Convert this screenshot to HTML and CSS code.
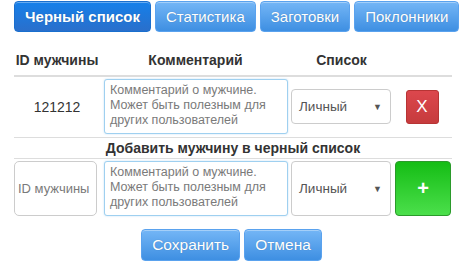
FILE: index.html
```html
<!DOCTYPE html>
<html lang="ru">
<head>
  <meta charset="UTF-8">
  <title>Черный список</title>
  <link rel="stylesheet" href="styles.css">
</head>
<body>

  <nav class="tabs">
    <button class="tab active">Черный список</button>
    <button class="tab">Статистика</button>
    <button class="tab">Заготовки</button>
    <button class="tab">Поклонники</button>
  </nav>

  <table class="black-list">
    <thead>
      <tr>
        <th class="col-id">ID мужчины</th>
        <th class="col-comment">Комментарий</th>
        <th class="col-list">Список</th>
        <th class="col-action"></th>
      </tr>
    </thead>
    <tbody>
      <tr>
        <td class="man-id">121212</td>
        <td><textarea class="comment" placeholder="Комментарий о мужчине. Может быть полезным для других пользователей"></textarea></td>
        <td>
          <div class="select">Личный<span class="arrow">&#9660;</span></div>
        </td>
        <td><button class="btn-remove">X</button></td>
      </tr>
      <tr class="add-title">
        <td colspan="4">Добавить мужчину в черный список</td>
      </tr>
      <tr class="add-row">
        <td><input type="text" class="id-input" placeholder="ID мужчины"></td>
        <td><textarea class="comment" placeholder="Комментарий о мужчине. Может быть полезным для других пользователей"></textarea></td>
        <td>
          <div class="select">Личный<span class="arrow">&#9660;</span></div>
        </td>
        <td><button class="btn-add">+</button></td>
      </tr>
    </tbody>
  </table>

  <div class="actions">
    <button class="btn-blue">Сохранить</button>
    <button class="btn-blue">Отмена</button>
  </div>

</body>
</html>
```

FILE: styles.css
```css
* {
  box-sizing: border-box;
}

body {
  margin: 0;
  font-family: 'Liberation Sans', Arial, sans-serif;
  color: #333;
  background: white;
}

.tabs {
  display: flex;
  gap: 4px;
  padding: 1px 0 0 14px;
}

.tab, .btn-blue {
  flex: none;
  height: 31px;
  padding: 0 10px;
  white-space: nowrap;
  font-family: 'Liberation Sans', Arial, sans-serif;
  font-size: 15px;
  color: white;
  text-shadow: 0 0 1px rgba(0,0,0,0.25);
  background: linear-gradient(to bottom, #74b6f6, #3e8fe2);
  border: 1px solid #5aa2ee;
  border-radius: 4px;
  box-shadow: inset 0 1px 0 rgba(255,255,255,0.35);
}

.tab.active {
  font-weight: bold;
  padding: 0 10px;
  background: linear-gradient(to bottom, #1580ea, #2a6fcb);
  border-color: #1a6fce;
}

.black-list {
  width: 438px;
  margin: 7px 0 0 14px;
  border-collapse: collapse;
  font-size: 14px;
}

.black-list th {
  font-weight: bold;
  padding: 13px 0 7px;
  border-bottom: 2px solid #ddd;
  text-align: center;
}

.col-id { width: 86px; }
.col-comment { width: 191px; }
.col-list { width: 101px; }

.black-list td {
  padding: 2px 0 3px;
  text-align: center;
  vertical-align: middle;
  border-bottom: 1px solid #ddd;
}

.comment {
  display: block;
  width: 184px;
  height: 55px;
  margin: 0 0 0 4px;
  padding: 3px 5px;
  resize: none;
  font-family: 'Liberation Sans', Arial, sans-serif;
  font-size: 12.5px;
  line-height: 15px;
  border: 1px solid #9fd0f0;
  border-radius: 3px;
  box-shadow: 0 0 2px rgba(102,175,233,0.4);
}

.comment::placeholder, .id-input::placeholder {
  color: #7a7a7a;
}

.select {
  display: flex;
  align-items: center;
  justify-content: space-between;
  width: 100px;
  height: 35px;
  padding: 0 8px 0 7px;
  font-size: 13.5px;
  color: #555;
  border: 1px solid #ccc;
  border-radius: 4px;
}

.arrow {
  font-size: 9px;
  color: #555;
}

.btn-remove {
  width: 33px;
  height: 34px;
  font-family: 'Liberation Sans', Arial, sans-serif;
  font-size: 17px;
  color: white;
  background: linear-gradient(to bottom, #dc474d, #c63b3d);
  border: 1px solid #b73434;
  border-radius: 3px;
}

.add-title td {
  padding: 2px 0 2px;
  font-weight: bold;
  border-top: 1px solid #ddd;
}

.add-row td {
  padding: 2px 0 3px;
  border-bottom: none;
}

.add-row .comment,
.add-row .select {
  height: 55px;
}

.id-input {
  display: block;
  width: 83px;
  height: 55px;
  padding: 0 3px;
  font-family: 'Liberation Sans', Arial, sans-serif;
  font-size: 13px;
  border: 1px solid #ccc;
  border-radius: 5px;
}

.btn-add {
  display: block;
  width: 56px;
  height: 55px;
  margin-left: 3px;
  font-family: 'Liberation Sans', Arial, sans-serif;
  font-size: 20px;
  font-weight: bold;
  color: white;
  background: linear-gradient(to bottom, #15bd15, #4bdf4b);
  border: 1px solid #2b9a2b;
  border-radius: 4px;
}

.actions {
  display: flex;
  justify-content: center;
  gap: 4px;
  margin-top: 10px;
}

.btn-blue {
  height: 32px;
  padding: 0 10px;
  font-size: 15.5px;
}
```
